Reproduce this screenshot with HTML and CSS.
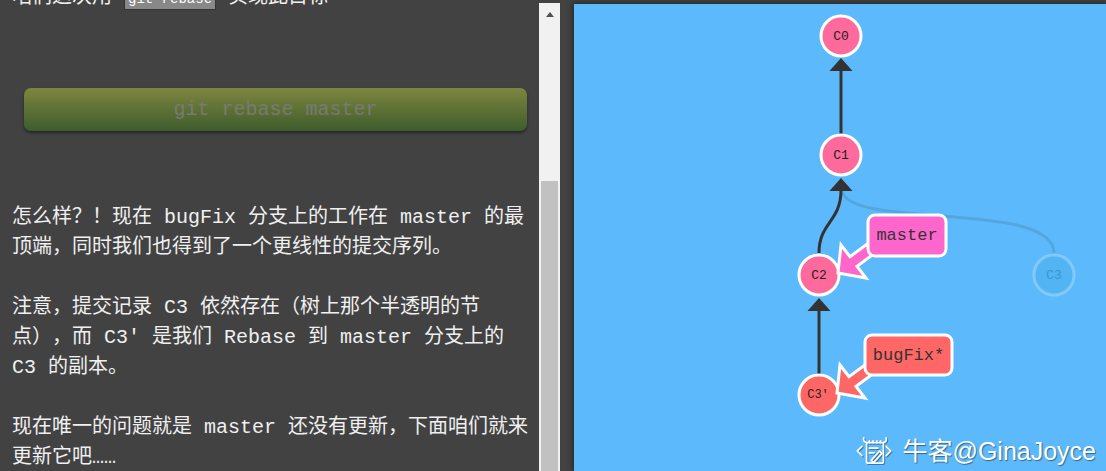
FILE: index.html
```html
<!DOCTYPE html>
<html lang="zh-CN">
<head>
<meta charset="utf-8">
<title>Git Rebase</title>
<link rel="stylesheet" href="styles.css">
</head>
<body>
<div class="app">
  <div class="dialog">
    <div class="dialog-content">
      <p class="para">咱们这次用 <code class="code">git rebase</code> 实现此目标</p>
      <div class="cmd-btn">git rebase master</div>
      <p class="para after-btn">怎么样？！现在 bugFix 分支上的工作在 master 的最顶端，同时我们也得到了一个更线性的提交序列。</p>
      <p class="para">注意，提交记录 C3 依然存在（树上那个半透明的节点），而 C3' 是我们 Rebase 到 master 分支上的 C3 的副本。</p>
      <p class="para">现在唯一的问题就是 master 还没有更新，下面咱们就来更新它吧……</p>
    </div>
  </div>
  <div class="scrollbar">
    <div class="sb-up"><span class="sb-arrow"></span></div>
    <div class="sb-thumb"></div>
  </div>
  <div class="canvas">
    <svg class="graph" viewBox="574 4 532 467" width="532" height="467">
      <path class="edge faded" d="M1054,253 C1054,200 850,230 842,191"/>
      <path class="edge" d="M841,134 V70"/>
      <polygon class="head" points="841,58 829.5,71 852.5,71"/>
      <path class="edge" d="M819,253 C819,222 841,222 841,190"/>
      <polygon class="head" points="841,178 829.5,191 852.5,191"/>
      <path class="edge" d="M819,374 V310"/>
      <polygon class="head" points="819,298 807.5,311 830.5,311"/>

      <circle class="node" cx="841" cy="36" r="20"/>
      <text class="node-text" x="841" y="36">C0</text>
      <circle class="node" cx="841" cy="155" r="20"/>
      <text class="node-text" x="841" y="155">C1</text>
      <circle class="node" cx="819" cy="275" r="20"/>
      <text class="node-text" x="819" y="275">C2</text>
      <circle class="node ghost" cx="1054" cy="275" r="20"/>
      <text class="node-text ghost-text" x="1054" y="275">C3</text>
      <circle class="node red" cx="819" cy="395" r="20"/>
      <text class="node-text small" x="818" y="395">C3'</text>

      <polygon class="branch-arrow magenta" points="838,273 841,245 850,256.7 878,236 885,245.6 857,266.3 866,278"/>
      <rect class="branch-box magenta" x="868" y="215" width="78" height="41" rx="7"/>
      <text class="branch-text" x="907" y="235.5">master</text>

      <polygon class="branch-arrow coral" points="837,393 840,365 849,376.7 877,356 884,365.6 856,386.3 865,398"/>
      <rect class="branch-box coral" x="865" y="335" width="87" height="40" rx="7"/>
      <text class="branch-text" x="908.5" y="355">bugFix*</text>
    </svg>
    <div class="watermark">
      <svg class="wm-icon" viewBox="0 0 40 30" width="38" height="28">
        <polyline points="7,10 2,15 7,20"/>
        <path d="M9,1 q-1,4 3,5"/>
        <rect x="12" y="6" width="18" height="22" rx="1"/>
        <path d="M15,6 v-2 M19,6 v-2 M23,6 v-2 M27,6 v-2"/>
        <path d="M15,12 h9 M15,17 h5"/>
        <path d="M17,25 l9,-10 l2.5,2.5 l-9,10 z"/>
        <polyline points="33,10 38,15 33,20"/>
        <path d="M33,1 q1,4 -3,5"/>
      </svg>
      <span class="wm-text">牛客@GinaJoyce</span>
    </div>
  </div>
</div>
</body>
</html>
```

FILE: styles.css
```css
* { box-sizing: border-box; }
html, body { margin: 0; height: 100%; }
body {
  background: #424242;
  overflow: hidden;
  font-family: "Liberation Mono", "Noto Sans CJK SC", monospace;
}
.app { display: flex; height: 471px; }

.dialog {
  width: 539px;
  flex: none;
  overflow: hidden;
  padding-left: 12px;
}
.dialog-content {
  width: 520px;
  margin-top: -17px;
  color: #f0f0f0;
  font-size: 20px;
  line-height: 30px;
  text-spacing-trim: space-all;
  text-autospace: no-autospace;
}
.para { margin: 0 0 30px; }
.after-btn { margin-top: 72px; }
.code {
  font-family: "Liberation Mono", monospace;
  font-size: 14px;
  background: #888888;
  border: 1px solid #333333;
  padding: 2px 3px;
  color: #ffffff;
}
.cmd-btn {
  margin: 74px 0 0 12px;
  width: 503px;
  height: 43px;
  border-radius: 7px;
  background: linear-gradient(#7e863f, #3d5c2c);
  box-shadow: 0 2px 3px rgba(0, 0, 0, 0.45);
  color: #7a7a72;
  font-size: 20px;
  display: flex;
  align-items: center;
  justify-content: center;
}

.scrollbar {
  width: 21px;
  flex: none;
  margin-top: 3px;
  background: #f1f1f1;
  display: flex;
  flex-direction: column;
}
.sb-up {
  height: 17px;
  padding-top: 9px;
  display: flex;
  justify-content: center;
}
.sb-arrow {
  width: 0;
  height: 0;
  border-left: 4.5px solid transparent;
  border-right: 4.5px solid transparent;
  border-bottom: 5px solid #505050;
}
.sb-thumb {
  flex: 1;
  margin: 161px 2px 0;
  background: #c1c1c1;
}

.canvas {
  position: relative;
  flex: 1;
  margin: 4px 0 0 14px;
  background: #5cbafc;
  box-shadow: 0 0 6px 1px rgba(0, 0, 0, 0.45);
}
.graph { display: block; }
.edge { fill: none; stroke: #333333; stroke-width: 3; }
.edge.faded { stroke-opacity: 0.15; }
.head { fill: #333333; }
.node { fill: #ff6a9c; stroke: #ffffff; stroke-width: 3; }
.node.red { fill: #ff6666; }
.node.ghost { fill: #52b4f2; stroke: rgba(255, 255, 255, 0.25); }
.node-text {
  font-family: "Liberation Mono", monospace;
  font-size: 13px;
  fill: #222222;
  text-anchor: middle;
  dominant-baseline: central;
}
.node-text.small { font-size: 12px; }
.node-text.ghost-text { fill: #3f95cf; }
.branch-arrow { stroke: #ffffff; stroke-width: 3; }
.branch-box { stroke: #ffffff; stroke-width: 3; }
.magenta { fill: #ff66cc; }
.coral { fill: #ff6666; }
.branch-text {
  font-family: "Liberation Mono", monospace;
  font-size: 17px;
  fill: #333333;
  text-anchor: middle;
  dominant-baseline: central;
}

.watermark {
  position: absolute;
  right: 10px;
  bottom: 6px;
  display: flex;
  align-items: center;
  gap: 10px;
  color: #ffffff;
  font: 25px/28px "Liberation Sans", "Noto Sans CJK SC", sans-serif;
  text-shadow: 1px 1px 1px rgba(0, 0, 0, 0.45);
}
.wm-icon {
  display: block;
  fill: none;
  stroke: #ffffff;
  stroke-width: 1.8;
  stroke-linejoin: round;
  stroke-linecap: round;
  filter: drop-shadow(1px 1px 0 rgba(0, 0, 0, 0.35));
}
```
